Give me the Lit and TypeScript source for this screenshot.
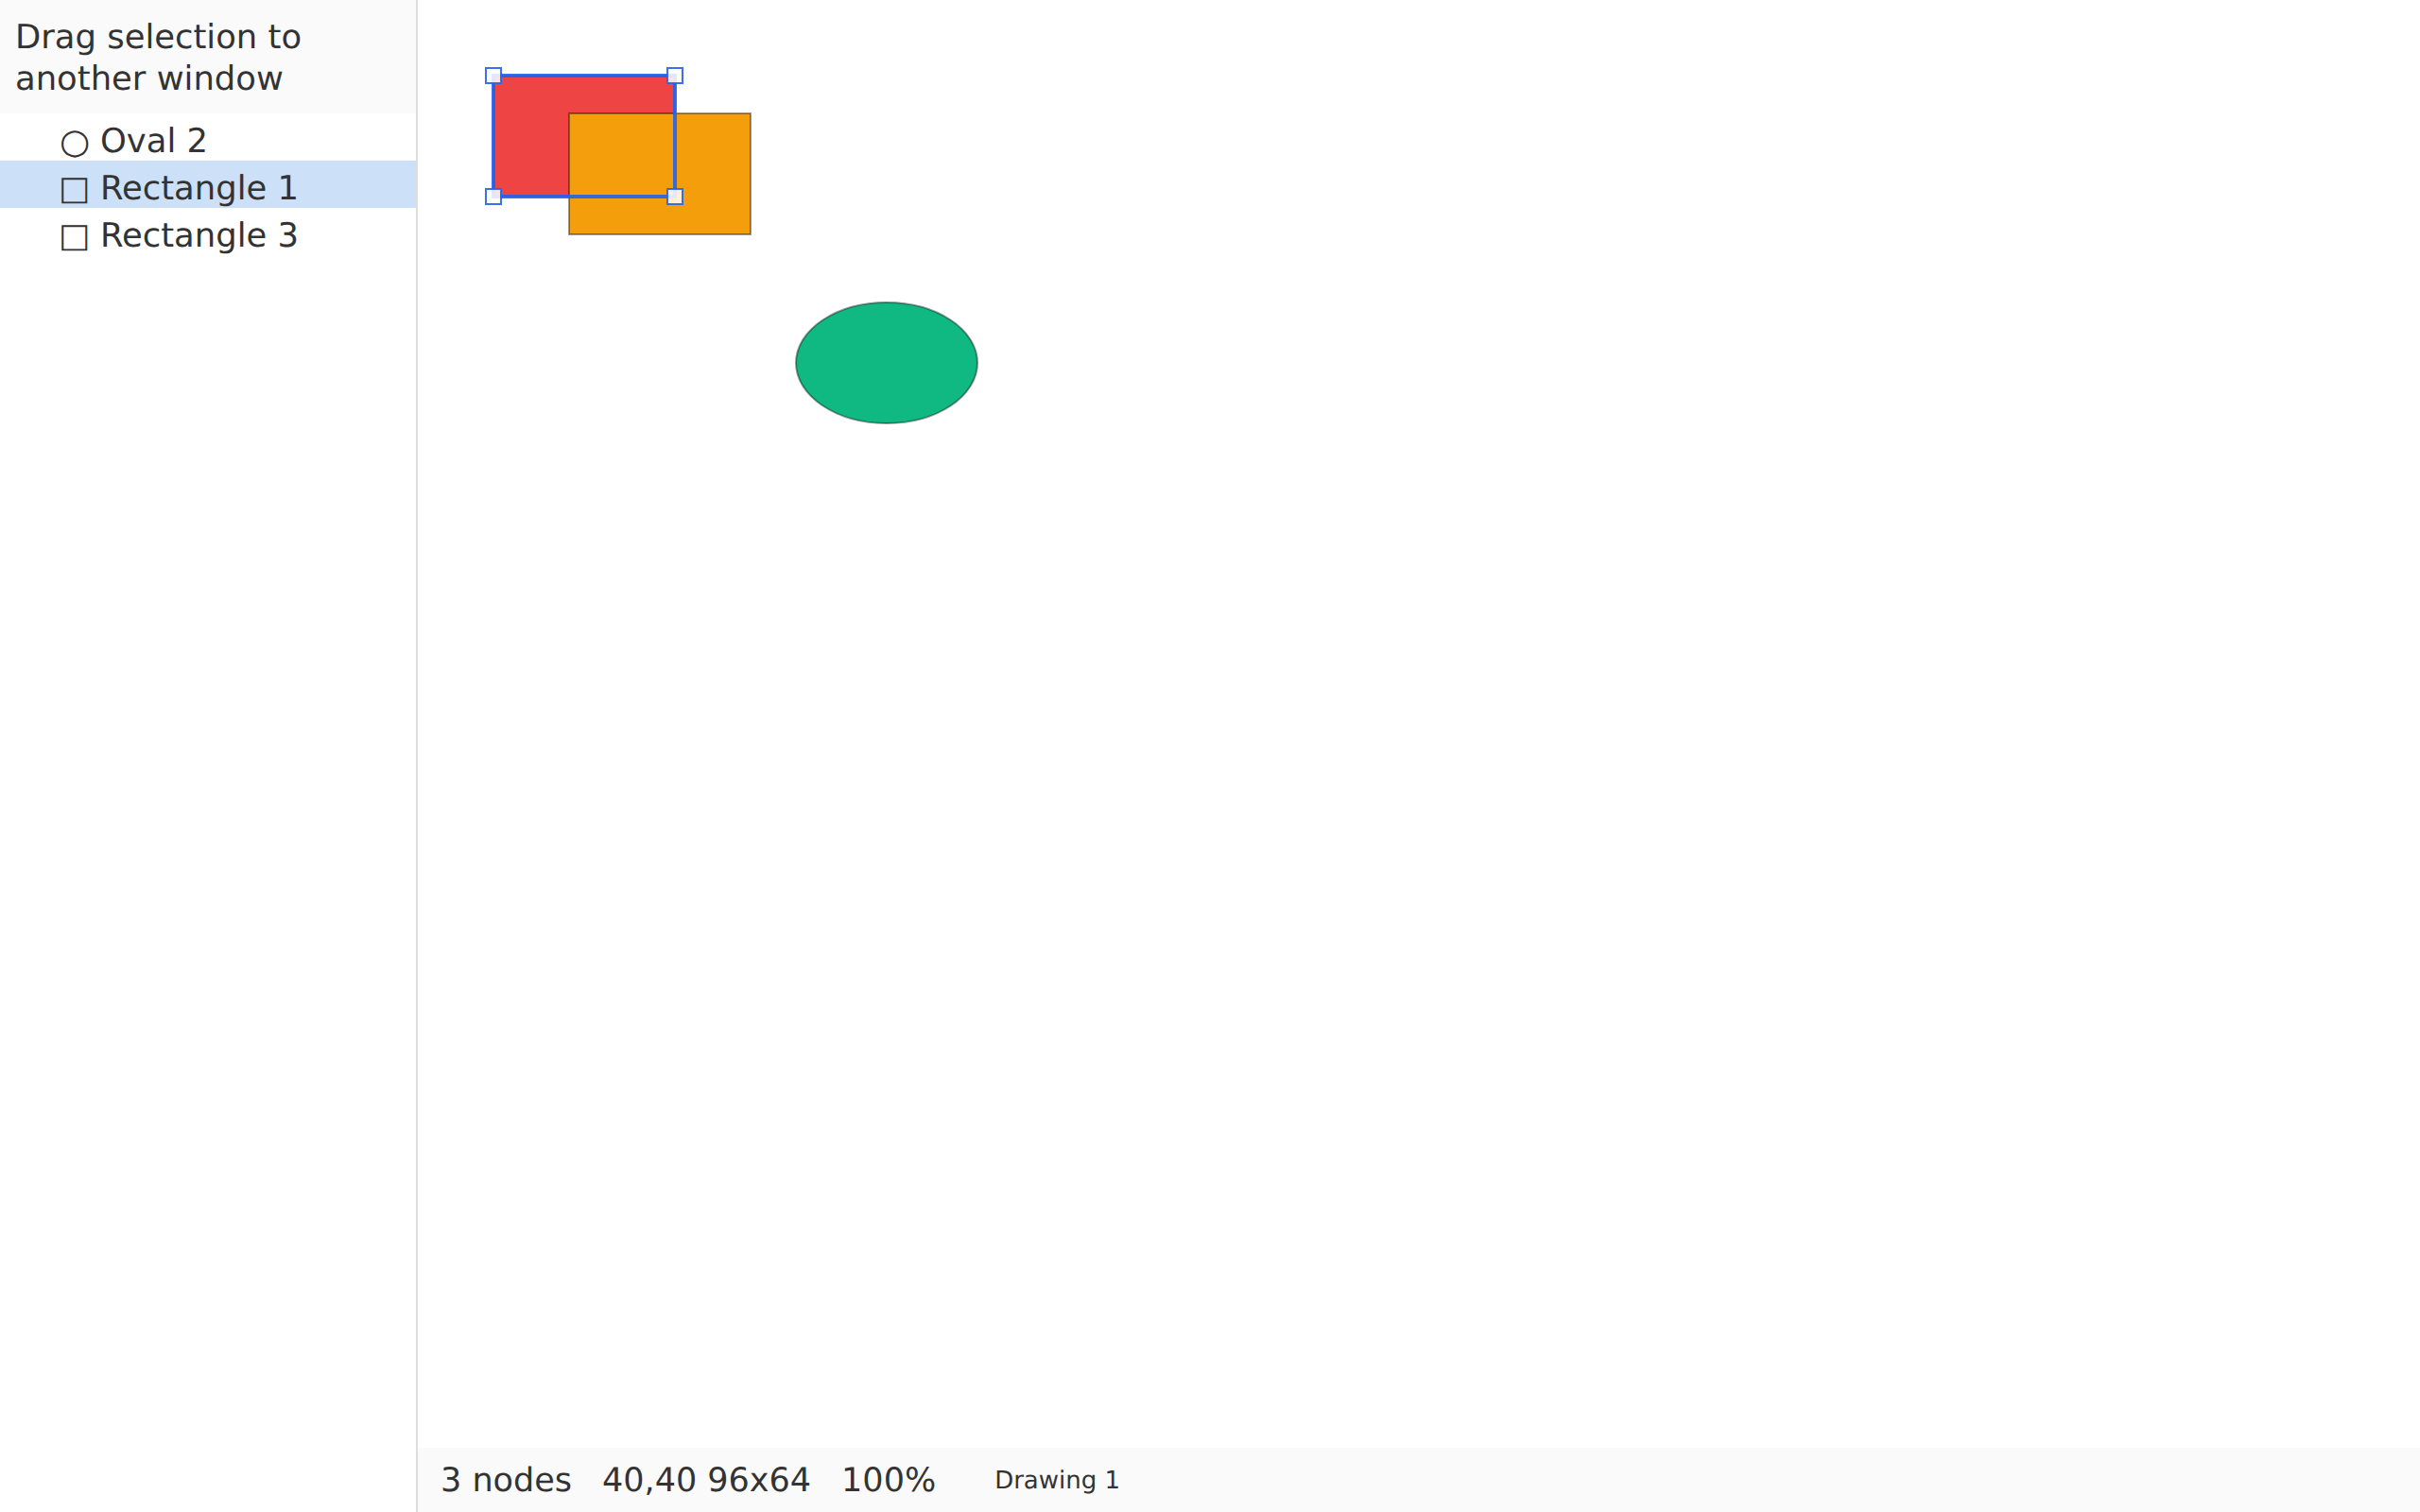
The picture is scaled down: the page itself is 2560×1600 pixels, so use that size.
import { LitElement, html, css, svg } from "lit";
import { customElement } from "lit/decorators.js";

const rows = [
  { glyph: "○", kind: "oval", name: "Oval 2", selected: false },
  { glyph: "□", kind: "rect", name: "Rectangle 1", selected: true },
  { glyph: "□", kind: "rect", name: "Rectangle 3", selected: false },
];

const handles = [
  [80, 80],
  [272, 80],
  [80, 208],
  [272, 208],
];

@customElement("app-root")
export class AppRoot extends LitElement {
  static styles = css`
    :host {
      display: flex;
      width: 2560px;
      height: 1600px;
      font-family: "DejaVu Sans", sans-serif;
      text-rendering: geometricPrecision;
      color: #333;
      background: #fff;
    }
    .side {
      width: 442px;
      flex: none;
      box-sizing: border-box;
      border-right: 2px solid #ddd;
      display: flex;
      flex-direction: column;
    }
    .hint {
      height: 120px;
      box-sizing: border-box;
      padding: 18px 16px 0;
      background: #fafafa;
      font-size: 35.4px;
      line-height: 44px;
    }
    .row {
      height: 50px;
      box-sizing: border-box;
      padding: 8px 0 0 62px;
      font-size: 35.4px;
      line-height: 44px;
      white-space: pre;
      display: flex;
    }
    .row.sel {
      background: #cce0f8;
    }
    .glyph {
      width: 44px;
      flex: none;
      box-sizing: border-box;
    }
    .glyph.oval {
      font-size: 37px;
      padding-left: 1px;
    }
    .main {
      flex: 1;
      display: flex;
      flex-direction: column;
      min-width: 0;
    }
    .canvas {
      flex: 1;
      min-height: 0;
    }
    .canvas svg {
      display: block;
      width: 100%;
      height: 100%;
    }
    .status {
      height: 68px;
      box-sizing: border-box;
      display: flex;
      align-items: center;
      gap: 32px;
      padding: 1px 24px 0;
      background: #fafafa;
      font-size: 35px;
    }
    .title {
      font-size: 26px;
      margin-left: 30px;
    }
  `;

  render() {
    return html`
      <div class="side">
        <div class="hint">Drag selection to another window</div>
        ${rows.map(
          (r) => html`<div class="row ${r.selected ? "sel" : ""}"><span class="glyph ${r.kind}">${r.glyph}</span><span>${r.name}</span></div>`
        )}
      </div>
      <div class="main">
        <div class="canvas">
          <svg xmlns="http://www.w3.org/2000/svg">
            <rect x="80" y="80" width="192" height="128" fill="#ef4444" stroke="rgba(0,0,0,.4)" stroke-width="2"></rect>
            <rect x="160" y="120" width="192" height="128" fill="#f59e0b" stroke="rgba(0,0,0,.4)" stroke-width="2"></rect>
            <ellipse cx="496" cy="384" rx="96" ry="64" fill="#10b981" stroke="rgba(0,0,0,.4)" stroke-width="2"></ellipse>
            <rect x="80" y="80" width="192" height="128" fill="none" stroke="rgba(37,99,235,.9)" stroke-width="4"></rect>
            ${handles.map(
              ([x, y]) =>
                svg`<rect x=${x - 8} y=${y - 8} width="16" height="16" fill="rgba(255,255,255,.85)" stroke="rgba(37,99,235,.9)" stroke-width="2"></rect>`
            )}
          </svg>
        </div>
        <div class="status">
          <span>3 nodes</span><span>40,40 96x64</span><span>100%</span>
          <span class="title">Drawing 1</span>
        </div>
      </div>
    `;
  }
}
